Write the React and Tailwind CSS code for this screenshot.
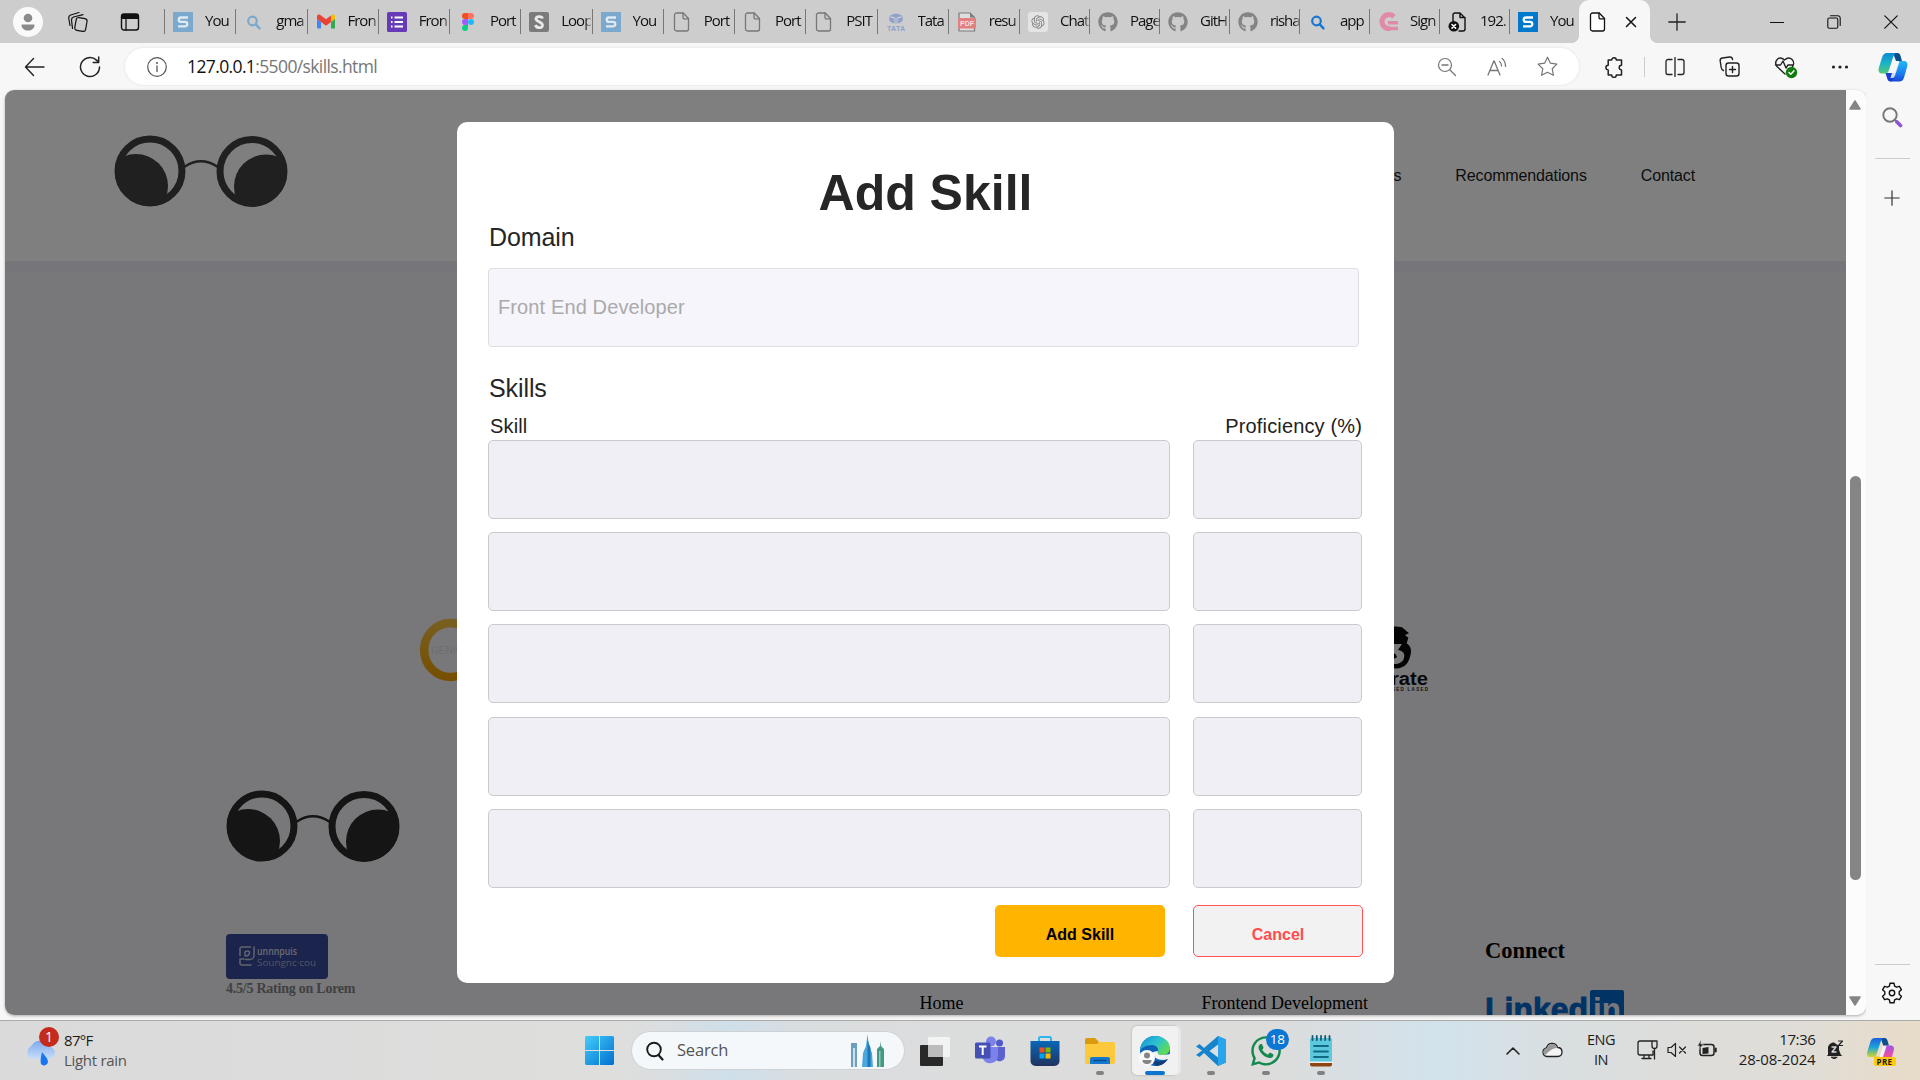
import React from "react";
import { FaGithub, FaWhatsapp } from "react-icons/fa";
import { RiOpenaiFill } from "react-icons/ri";

const Svg = ({ w = 20, h = 20, box, children, className = "" }) => (
  <svg width={w} height={h} viewBox={box || `0 0 ${w} ${h}`} fill="none" strokeLinecap="round" strokeLinejoin="round" className={"shrink-0 " + className}>
    {children}
  </svg>
);

/* ---------- tab icons ---------- */
const SIcon = ({ color, glyph = "#fff" }) => (
  <Svg>
    <rect width="20" height="20" fill={color} />
    <path d="M15 5.500H8a2.200 2.200 0 0 0 0 4.400h4a2.200 2.200 0 0 1 0 4.500H5" stroke={glyph} strokeWidth="2.400" strokeLinecap="butt" />
  </Svg>
);
const LoopIcon = () => (
  <Svg>
    <rect width="20" height="20" rx="2" fill="#7b7b7b" />
    <path d="M13.500 6.500C13 4.400 7.500 3.400 7 6.800c0 3.200 6.500 2.800 6.500 6.400 0 3.300-6 3.300-7-.2" stroke="#e9e9e9" strokeWidth="2.800" strokeLinecap="butt" />
  </Svg>
);
const SearchIcon = ({ color }) => (
  <Svg>
    <circle cx="8.500" cy="9" r="4.300" stroke={color} strokeWidth="2.200" />
    <path d="M11.800 12.400l3.700 4" stroke={color} strokeWidth="2.400" />
  </Svg>
);
const Gmail = () => (
  <Svg>
    <path d="M15 9v7.500h4v-12z" fill="#34a853" />
    <path d="M15 5.200V10l4-3V4.500c0-1.800-2-2.600-3.300-1.500z" fill="#fbbc04" />
    <path d="M1 4.500C1 2.700 3 2 4.300 3L10 7.300 15 3.500V10l-5 3.700L5 10 1 7z" fill="#ea4335" />
    <path d="M1 7l4 3v6.500H2a1 1 0 0 1-1-1z" fill="#4285f4" />
  </Svg>
);
const FormIcon = () => (
  <Svg>
    <rect width="20" height="20" rx="1.500" fill="#673ab7" />
    <path d="M4 5.500h1.500M4 10h1.500M4 14.500h1.500M7.500 5.500H16M7.500 10H16M7.500 14.500H16" stroke="#fff" strokeWidth="2.200" strokeLinecap="butt" />
  </Svg>
);
const Figma = () => (
  <Svg>
    <path d="M10 1H7a3 3 0 0 0 0 6h3z" fill="#f24e1e" />
    <path d="M10 1h3a3 3 0 0 1 0 6h-3z" fill="#ff7262" />
    <path d="M10 7H7a3 3 0 0 0 0 6h3z" fill="#a259ff" />
    <circle cx="13" cy="10" r="3" fill="#1abcfe" />
    <path d="M10 13H7a3 3 0 1 0 3 3z" fill="#0acf83" />
  </Svg>
);
const FileIcon = ({ color = "#777", fill = "none" }) => (
  <Svg>
    <path d="M4.500 1h6.700L16.500 6.500V17a2 2 0 0 1-2 2h-10a2 2 0 0 1-2-2V3a2 2 0 0 1 2-2z" stroke={color} strokeWidth="1.300" fill={fill} />
    <path d="M11 1v4.500a1.300 1.300 0 0 0 1.300 1.300h4.200" stroke={color} strokeWidth="1.300" />
  </Svg>
);
const Tata = () => (
  <Svg>
    <ellipse cx="10" cy="6.800" rx="7" ry="5" fill="#8ea0cb" />
    <path d="M9 12V7.500C8.800 5.500 7 5 4.500 5.200M11 12V7.500c.2-2 2-2.500 4.500-2.300" stroke="#cdcdcd" strokeWidth="1.100" />
    <text x="10" y="18.600" textAnchor="middle" fontFamily="Liberation Sans" fontWeight="700" fontSize="7" fill="#8ea0cb" textLength="18">TATA</text>
  </Svg>
);
const Pdf = () => (
  <Svg>
    <path d="M2 1h11l4.500 4.500V19H2z" stroke="#7b7b7b" strokeWidth="1.200" fill="#dedede" />
    <path d="M13 1v4.500h4.500z" fill="#7b7b7b" />
    <rect x="1" y="6" width="18" height="10.500" rx="1" fill="#e27f80" />
    <text x="10" y="14" textAnchor="middle" fontFamily="Liberation Sans" fontWeight="700" fontSize="7" fill="#f7dede" textLength="14">PDF</text>
  </Svg>
);
const Gpt = () => (
  <span className="flex h-5 w-5 shrink-0 items-center justify-center rounded-[3px] bg-[#e4e4e4]"><RiOpenaiFill size={16} color="#838383" /></span>
);
const Git = () => <FaGithub size={20} color="#848484" className="shrink-0" />;
const Pink = () => (
  <Svg>
    <path d="M16 4.700A7 7 0 1 0 12 16.500" stroke="#e08ba5" strokeWidth="5" strokeLinecap="butt" />
    <path d="M10 10.800h10M10 16.500h10" stroke="#e08ba5" strokeWidth="3.600" strokeLinecap="butt" />
  </Svg>
);
const BadFile = () => (
  <Svg>
    <path d="M5 9V3a2 2 0 0 1 2-2h5l5 5v11a2 2 0 0 1-2 2h-4M12 1v4.500h5" stroke="#111" strokeWidth="1.400" />
    <circle cx="5.800" cy="14.300" r="5.300" fill="#111" />
    <path d="M4 12.500l3.600 3.600M7.600 12.500L4 16.100" stroke="#fff" strokeWidth="1.500" />
  </Svg>
);

const wideTabs = [
  [<SIcon color="#7ba9cd" glyph="#dfe9f1" />, "You"], [<SearchIcon color="#7ba9cd" />, "gma"], [<Gmail />, "Fron"], [<FormIcon />, "Fron"],
  [<Figma />, "Port"], [<LoopIcon />, "Loop"], [<SIcon color="#7ba9cd" glyph="#dfe9f1" />, "You"], [<FileIcon />, "Port"],
  [<FileIcon />, "Port"], [<FileIcon />, "PSIT"], [<Tata />, "Tata"], [<Pdf />, "resu"],
];
const narrowTabs = [
  [<Gpt />, "Chat"], [<Git />, "Page"], [<Git />, "GitH"], [<Git />, "risha"], [<SearchIcon color="#1976d2" />, "app"],
  [<Pink />, "Sign"], [<BadFile />, "192."], [<SIcon color="#0078cb" />, "You"],
];

const Tab = ({ icon, label, className }) => (
  <div className={"flex h-[43px] items-center " + className}>
    <div className="mr-2 h-[25px] w-px shrink-0 bg-[#777]" />
    {icon}
    <span className="-mt-0.5 ml-3 w-[30px] whitespace-nowrap text-[15px] tracking-[-1px] text-[#111] [mask-image:linear-gradient(to_right,#000_80%,rgba(0,0,0,0.25))]">{label}</span>
  </div>
);

const TabBar = () => (
  <div className="flex h-[43px] bg-[#cdcdcd]">
    <div className="flex w-[164px] shrink-0 items-center">
      <div className="ml-[13px] flex h-[30px] w-[30px] items-center justify-center rounded-full bg-[#fafafa]">
        <Svg w={18} h={20}>
          <circle cx="9" cy="6" r="4.300" fill="#8b8b8b" />
          <path d="M2.500 12.500h13c0 4-3 6-6.500 6s-6.500-2-6.500-6z" fill="#8b8b8b" />
        </Svg>
      </div>
      <Svg w={22} h={22} className="ml-6">
        <rect x="8.500" y="7" width="11" height="13" rx="2.500" transform="rotate(10 14 13)" stroke="#111" strokeWidth="1.200" />
        <path d="M5.500 17.500L4.500 9a3 3 0 0 1 2-3l9.500-2.300M3 14.500L1.700 7a3 3 0 0 1 2-3L12 1.500" stroke="#111" strokeWidth="1.200" />
      </Svg>
      <Svg w={20} h={20} className="ml-[31px]">
        <rect x="1.500" y="2" width="17" height="16" rx="2.500" stroke="#111" strokeWidth="1.400" />
        <path d="M1.500 7V4.500A2.500 2.500 0 0 1 4 2h12a2.500 2.500 0 0 1 2.500 2.500V7z" fill="#111" />
        <path d="M6 7v11" stroke="#111" strokeWidth="1.300" />
      </Svg>
    </div>
    {wideTabs.map(([i, l], k) => <Tab key={k} icon={i} label={l} className="w-[71.250px]" />)}
    {narrowTabs.map(([i, l], k) => <Tab key={k} icon={i} label={l} className="w-[70px]" />)}
    <div className="relative flex w-[71px] items-center rounded-t-[10px] bg-[#f7f7f7] pl-[9px]">
      <div className="absolute -left-2 bottom-0 h-2 w-2 bg-[radial-gradient(circle_at_0_0,#cdcdcd_8px,#f7f7f7_8px)]" />
      <div className="absolute -right-2 bottom-0 h-2 w-2 bg-[radial-gradient(circle_at_100%_0,#cdcdcd_8px,#f7f7f7_8px)]" />
      <FileIcon color="#111" fill="#fff" />
      <Svg w={12} h={12} className="ml-[17px]"><path d="M1.500 1.500l9 9M10.500 1.500l-9 9" stroke="#111" strokeWidth="1.500" /></Svg>
    </div>
    <div className="flex flex-1 items-center justify-between pl-[18px] pr-[22px]">
      <Svg w={18} h={18}><path d="M9 .8v16.400M.8 9h16.400" stroke="#222" strokeWidth="1.300" /></Svg>
      <div className="flex items-center gap-[43px]">
        <Svg w={14} h={14}><path d="M.5 7.500h13" stroke="#111" strokeWidth="1.200" /></Svg>
        <Svg w={14} h={14}>
          <rect x=".8" y="3" width="10" height="10.300" rx="1.500" stroke="#111" strokeWidth="1.100" />
          <path d="M3.500.8H11a2.200 2.200 0 0 1 2.200 2.200v7.500" stroke="#111" strokeWidth="1.100" />
        </Svg>
        <Svg w={14} h={14}><path d="M.8.8l12.400 12.400M13.200.8L.8 13.200" stroke="#111" strokeWidth="1.200" /></Svg>
      </div>
    </div>
  </div>
);

const Copilot = ({ className, w = 30, h = 30, warm }) => (
  <Svg w={w} h={h} box="0 0 30 30" className={className}>
    <defs>
      <linearGradient id={warm ? "ca1" : "cb1"} x1="0" y1="0" x2="0" y2="1">
        <stop stopColor={warm ? "#1c5fe0" : "#0e8ad0"} /><stop offset=".5" stopColor={warm ? "#1ea6d8" : "#19b4c8"} /><stop offset="1" stopColor={warm ? "#d6d623" : "#55c878"} />
      </linearGradient>
      <linearGradient id={warm ? "ca2" : "cb2"} x1="0" y1="0" x2="0" y2="1">
        <stop stopColor={warm ? "#a650e8" : "#20b8f5"} /><stop offset=".6" stopColor={warm ? "#f0509a" : "#1a7ff0"} /><stop offset="1" stopColor={warm ? "#ff9350" : "#1746d8"} />
      </linearGradient>
    </defs>
    <path d="M15 1h4.500c2 0 2.600 1.500 3.200 3.500L24 9h-6z" fill="#0b4f8f" />
    <path d="M21 9h5c3 0 4 2.500 3.200 5.500l-3 10.500c-.8 3-2.400 4.500-5 4.500H10.500c3 0 4-1.500 5-5z" fill={`url(#${warm ? "ca2" : "cb2"})`} />
    <path d="M7.500 21l1.700 5.500c.6 2 1.300 3 3.300 3 1.700 0 2.600-1.500 3.200-3.500l1.700-5z" fill={warm ? "#f3b52a" : "#1540d8"} />
    <path d="M9 1h10c-2.400 0-3.200 2-4 4.500L11 18c-.8 2.500-1.800 3.500-4 3.500H4C1 21.500 0 19 .8 16L4 5.500C5 2.500 6.500 1 9 1z" fill={`url(#${warm ? "ca1" : "cb1"})`} />
    <path d="M17.500 10h4l-4.300 13c-.7 2-1.500 3-2.700 3h-2l4-13.500z" fill="#f7f7f7" opacity=".85" />
  </Svg>
);

const Toolbar = () => (
  <div className="flex h-[47px] items-center bg-[#f7f7f7]">
    <Svg w={22} h={22} className="ml-6"><path d="M20 11H1.500M9.500 2.500L1.500 11l8 8.500" stroke="#222" strokeWidth="1.400" /></Svg>
    <Svg w={22} h={22} className="ml-[33px]"><path d="M20.500 11A9.500 9.500 0 1 1 17.500 4.100L19.500 6M19.700 1v5.500h-5.500" stroke="#222" strokeWidth="1.500" /></Svg>
    <div className="ml-6 flex h-[37px] w-[1454px] items-center rounded-full bg-white shadow-[0_0_3px_rgba(0,0,0,0.1)]">
      <Svg w={20} h={20} className="ml-[22px]">
        <circle cx="10" cy="10" r="9.300" stroke="#555" strokeWidth="1.200" />
        <path d="M10 9v5.500" stroke="#555" strokeWidth="1.300" /><circle cx="10" cy="6" r="1" fill="#555" />
      </Svg>
      <span className="ml-5 text-[17.500px] tracking-[-0.620px] text-[#767676]"><span className="text-[#111]">127.0.0.1</span>:5500/skills.html</span>
      <div className="ml-auto mr-[21px] flex items-center gap-[30px]">
        <Svg><circle cx="8" cy="8" r="6.500" stroke="#767676" strokeWidth="1.200" /><path d="M5 8h6M13 13l5.500 5.500" stroke="#767676" strokeWidth="1.300" /></Svg>
        <Svg><path d="M1 18L6.800 4h.4L13 18M3 13.500h8" stroke="#767676" strokeWidth="1.300" /><path d="M12.500 4.500c1.500 1 2 2.500 2 4.500M15 1.500c2.500 1.800 3.500 4.500 3.500 8" stroke="#767676" strokeWidth="1.200" /></Svg>
        <Svg w={21} h={21}><path d="M10.500 1.200l2.900 6 6.500.9-4.700 4.600 1.200 6.600-5.900-3.100-5.900 3.100 1.200-6.600L1.100 8.100l6.500-.9z" stroke="#767676" strokeWidth="1.200" /></Svg>
      </div>
    </div>
    <Svg w={22} h={22} box="1 0 19 19" className="ml-6"><path d="M5.500 3.500h3a2 2 0 1 1 4 0h4.500v4.500a2 2 0 0 0-2 2 2 2 0 0 0 2 2V16.500h-4.500a2 2 0 1 1-4 0h-3V12a2 2 0 1 1 0-4z" stroke="#222" strokeWidth="1.300" /></Svg>
    <div className="ml-[19px] h-5 w-px bg-[#ccc]" />
    <Svg w={20} h={20} className="ml-5"><path d="M7 2.500H3a2 2 0 0 0-2 2v11a2 2 0 0 0 2 2h4M13 2.500h4a2 2 0 0 1 2 2v11a2 2 0 0 1-2 2h-4M10 .5v19" stroke="#222" strokeWidth="1.300" /></Svg>
    <Svg w={21} h={21} className="ml-[34px]">
      <rect x="7" y="7" width="13" height="13" rx="2.500" stroke="#222" strokeWidth="1.400" />
      <path d="M13.500 10.500v6M10.500 13.500h6M4.500 14.500C3 14 2.400 13 2.200 11.500l-1-6.500c-.2-1.500.8-2.800 2.300-3l7-1c1.700-.2 2.800.7 3.100 2.500" stroke="#222" strokeWidth="1.400" />
    </Svg>
    <Svg w={24} h={24} className="ml-[34px]">
      <path d="M11 19L3 11.500C-.5 7 4.500-.5 10.500 5c6-5.500 11.500 2 8 6.500M1.500 10h5l2.500-4 3 7 2-3h5" stroke="#222" strokeWidth="1.400" />
      <circle cx="17.500" cy="17.500" r="5.700" fill="#107c10" /><path d="M15 17.500l1.800 1.800 3.200-3.500" stroke="#fff" strokeWidth="1.400" />
    </Svg>
    <Svg w={18} h={6} className="ml-[33px]"><circle cx="2.500" cy="3" r="1.600" fill="#222" /><circle cx="9" cy="3" r="1.600" fill="#222" /><circle cx="15.500" cy="3" r="1.600" fill="#222" /></Svg>
    <Copilot className="ml-[29px]" />
  </div>
);

/* ---------- page ---------- */
const Glasses = ({ color, className, id }) => (
  <Svg w={174} h={73} className={className}>
    <clipPath id={id + "l"}><circle cx="36" cy="36" r="35" /></clipPath>
    <clipPath id={id + "r"}><circle cx="138" cy="36.500" r="35" /></clipPath>
    <circle cx="36" cy="36" r="32" stroke={color} strokeWidth="7" />
    <circle cx="138" cy="36.500" r="32" stroke={color} strokeWidth="7" />
    <circle cx="22" cy="51" r="32" fill={color} clipPath={`url(#${id}l)`} />
    <circle cx="152" cy="51.500" r="32" fill={color} clipPath={`url(#${id}r)`} />
    <path d="M71 31.500Q87 21 103 31.500" stroke={color} strokeWidth="2.400" />
  </Svg>
);

const Page = () => (
  <div className="flex h-full w-full flex-col overflow-hidden bg-[#f0f0f4]">
    <div className="flex h-[171px] shrink-0 items-start justify-between bg-white pl-[109px] pr-[151px] shadow-[0_11px_0_#ebebf4]">
      <Glasses id="top" color="#404040" className="mt-[45px]" />
      <div className="mt-[74px] flex gap-[54px] font-['Liberation_Sans'] text-base tracking-[-0.130px] text-[#1a1a1a]">
        <span>Projects</span><span>Recommendations</span><span>Contact</span>
      </div>
    </div>
    <div className="mt-[357px] flex h-[64px] shrink-0 justify-between pl-[415px] pr-[417px]">
      <Svg w={66} h={64}>
        <defs><linearGradient id="ring" x1="0" y1="0" x2="0" y2="1"><stop stopColor="#f0bd3f" /><stop offset="1" stopColor="#ee9f00" /></linearGradient></defs>
        <ellipse cx="30.500" cy="32" rx="26.300" ry="27" stroke="url(#ring)" strokeWidth="8.500" />
        <text x="11" y="35.500" fontFamily="Liberation Sans" fontSize="10" fill="#dadade">GENIUS</text>
      </Svg>
      <Svg w={100} h={76}>
        <path d="M52 10c8-2 16-2 21-.7l7 6-4 1.700 3.300 2.700-1.600 5.600c4 3 5 6.500 4 11C80 45 76 50.300 67 50.500 54 50 46 40 48 26z" fill="#080808" />
        <path d="M60 26h13l-4 6c6 1 7 4.500 6 8-1 4-5 6-10 6-5-1-7-3-8-6 4 2 8 2 11-1-1-4-5-5-8-5z" fill="#f0f0f4" />
        <text x="6" y="67" fontFamily="Liberation Sans" fontWeight="700" fontSize="18" fill="#111" textLength="93" lengthAdjust="spacingAndGlyphs">corporate</text>
        <text x="21" y="73" fontFamily="Liberation Sans" fontWeight="700" fontSize="4.500" fill="#222" textLength="78">PROJECT BASED LASED</text>
      </Svg>
    </div>
    <div className="mt-[107px] flex h-[226px] shrink-0 justify-between pl-[221px] pr-[221px]">
      <div className="w-[174px]">
        <Glasses id="foot" color="#2a2a2a" className="mt-[1px]" />
        <div className="mt-[71px] flex h-[45px] w-[102px] items-center rounded-[4px] bg-[#364899]">
          <Svg w={102} h={45}>
            <path d="M28 13v8.500a4 4 0 0 1-4 4h-4.500M24.500 13H16a2 2 0 0 0-2 2v6.500M14 25v4c0 1.500 1 2 2 2h9M18 25h-3M19 22v-3.500c0-2 4.500-2 4.500 0s-1 3.500-4.500 3.500z" stroke="#c4c8d8" strokeWidth="1.500" />
            <text x="31" y="21" fontFamily="Open Sans" fontWeight="600" fontSize="10" fill="#d4d7e4" textLength="40" lengthAdjust="spacingAndGlyphs">unnnpuis</text>
            <text x="31" y="31.500" fontFamily="Open Sans" fontSize="9.500" fill="#a4aac8" textLength="59" lengthAdjust="spacingAndGlyphs">Soungnc·cou</text>
          </Svg>
        </div>
        <div className="mt-px whitespace-nowrap font-['Liberation_Serif'] text-[14px] font-bold leading-[18px] tracking-[-0.240px] text-[#808080]">4.5/5 Rating on Lorem</div>
      </div>
      <div className="ml-[514px] mt-[202px] flex w-[560px] font-['Liberation_Serif'] text-lg leading-6 text-black">
        <div className="w-[282px]">Home</div><div>Frontend Development</div>
      </div>
      <div className="mt-[150px] w-[140px] font-['Liberation_Serif'] text-black">
        <div className="text-[22.500px] font-bold leading-6">Connect</div>
        <Svg w={139} h={40} className="mt-[27px]">
          <text x="0" y="31" fontFamily="Liberation Sans" fontWeight="700" fontSize="34" fill="#0466ca" stroke="#0466ca" strokeWidth="1" textLength="103" lengthAdjust="spacingAndGlyphs">Linked</text>
          <rect x="105" y="0" width="34" height="36" rx="2" fill="#0466ca" />
          <text x="108" y="31" fontFamily="Liberation Sans" fontWeight="700" fontSize="34" fill="#f0f0f4" textLength="28" lengthAdjust="spacingAndGlyphs">in</text>
        </Svg>
      </div>
    </div>
  </div>
);

const rows = [0, 1, 2, 3, 4];
const field = "rounded-[5px] border border-[#c9c9ce] bg-[#f0eff6]";

const Modal = () => (
  <div className="absolute inset-0 bg-black/50 pl-[452px] pt-8">
    <div className="flex h-[861px] w-[937px] flex-col rounded-[10px] bg-white px-[31px] font-['Liberation_Sans'] text-[#262626]">
      <h1 className="mt-[41px] text-center text-[50px] font-bold leading-[60px]">Add Skill</h1>
      <div className="mt-px pl-px text-[25px] leading-[26px] tracking-[-0.100px]">Domain</div>
      <div className="mt-[18px] flex h-[79px] w-[871px] items-center rounded-[4px] border border-[#dddde2] bg-[#f5f5fb] pb-0.5 pl-[9px] text-[20px] tracking-[0.120px] text-[#aaa]">Front End Developer</div>
      <div className="mt-[28px] pl-px text-[25px] leading-[26px] tracking-[-0.100px]">Skills</div>
      <div className="mt-[14px] flex w-[874px] justify-between pl-0.5 text-[20px] leading-[22px] tracking-[0.150px] text-[#222]"><span>Skill</span><span>Proficiency (%)</span></div>
      <div className="mt-[3px] flex flex-col gap-[13.200px]">
        {rows.map((r) => (
          <div key={r} className="flex h-[79px] w-[874px] justify-between">
            <div className={"w-[682px] " + field} />
            <div className={"w-[169px] " + field} />
          </div>
        ))}
      </div>
      <div className="mt-[17.200px] flex h-[52px] w-[875px] justify-end gap-7 text-base font-bold">
        <button className="w-[170px] rounded-[5px] bg-[#ffb400] pt-2 text-black">Add Skill</button>
        <button className="w-[170px] rounded-[5px] border border-[#ff5252] bg-[#f2f2f2] pt-2 text-[#ff4d4d]">Cancel</button>
      </div>
    </div>
  </div>
);

const Sidebar = () => (
  <div className="flex w-[54px] flex-col items-center bg-[#f7f7f7] pr-[2px]">
    <Svg w={22} h={22} className="mt-4">
      <circle cx="9" cy="9" r="6.700" stroke="#777" strokeWidth="1.900" /><path d="M14 14l2 2" stroke="#777" strokeWidth="2" /><path d="M16 16l3.500 3.500" stroke="#9052cf" strokeWidth="3.600" />
    </Svg>
    <div className="mt-[30px] h-px w-[35px] bg-[#ccc]" />
    <Svg w={16} h={16} className="mt-[31px]"><path d="M8 .8v14.400M.8 8h14.400" stroke="#333" strokeWidth="1.200" /></Svg>
    <div className="mt-auto h-px w-[35px] bg-[#ccc]" />
    <Svg w={22} h={22} className="mb-4 mt-[17px]">
      <path d="M9 1.200h4l.6 2.900 2 1.100 2.800-.9 2 3.400-2.200 2v2.600l2.200 2-2 3.400-2.800-.9-2 1.100-.6 2.900H9l-.6-2.900-2-1.100-2.800.9-2-3.400 2.200-2V9.700l-2.200-2 2-3.400 2.800.9 2-1.100z" stroke="#111" strokeWidth="1.400" />
      <circle cx="11" cy="11" r="2.700" stroke="#111" strokeWidth="1.400" />
    </Svg>
  </div>
);

/* ---------- taskbar ---------- */
const Cell = ({ children, dot, active }) => (
  <div className="flex w-[55.200px] shrink-0 justify-center">
    <div className={"relative flex h-[49px] w-[46px] items-center justify-center rounded-[5px] " + (active ? "bg-[#f1f1f1] shadow-[3px_0_0_#e9e9e9,0_0_2px_#999]" : "")}>
      {children}
      {dot && <div className={"absolute bottom-0 h-1 rounded-full " + (active ? "w-5 bg-[#0b74d1]" : "w-2 bg-[#828282]")} />}
    </div>
  </div>
);

const Taskbar = () => (
  <div className="flex h-[60px] items-center border-t border-[#aaa] bg-[linear-gradient(90deg,#dadada_0%,#dededd_32%,#dbdedf_34%,#cfdfea_38%,#dadddf_42%,#dcdcdb_58%,#dcdcdb_66%,#d9dee1_69%,#d2e3ec_75%,#d8dfe2_80%,#dddddb_87%,#e0ddd7_94%,#e8dcc8_100%)] text-[#1c1c1c]">
    <div className="relative ml-6 -mt-0.5">
      <Svg w={34} h={40}>
        <defs><linearGradient id="cl" x1="0" y1="0" x2="0" y2="1"><stop stopColor="#7ca9f0" /><stop offset="1" stopColor="#c9ddf8" /></linearGradient></defs>
        <path d="M8 29a7 7 0 0 1-.5-12.900A9.500 9.500 0 0 1 25 17a6 6 0 0 1 0 12z" fill="url(#cl)" />
        <path d="M18 22c3 4 6 6.500 6 10a4 4 0 0 1-7 2c-1-3 0-8 1-12z" fill="#1976f2" />
      </Svg>
      <div className="absolute -top-[3px] left-[15px] flex h-5 w-5 items-center justify-center rounded-full bg-[#c42b1c] text-[14px] text-white">1</div>
    </div>
    <div className="-mt-0.5 ml-[6px] w-[521px] text-[15px] leading-5 tracking-[-0.300px]"><div className="tracking-[-0.700px]">87°F</div><div className="text-[#555]">Light rain</div></div>
    <Svg w={29} h={29}>
      <defs><linearGradient id="win" x1="0" y1="0" x2="29" y2="29" gradientUnits="userSpaceOnUse"><stop stopColor="#45ccfb" /><stop offset="1" stopColor="#0070d0" /></linearGradient></defs>
      <path d="M1 0h13v14H0V1zM15 0h13l1 1v13H15zM0 15h14v14H1l-1-1zM15 15h14v13l-1 1H15z" fill="url(#win)" />
    </Svg>
    <div className="ml-[17px] flex h-[39px] w-[274px] items-center rounded-full border border-[#cfd2d4] bg-[#f5f8fa] pl-[13px]">
      <Svg w={19} h={20}><circle cx="9" cy="8.500" r="6.800" stroke="#1b1b1b" strokeWidth="1.900" /><path d="M13.500 14l4 4.500" stroke="#1b1b1b" strokeWidth="2.200" /></Svg>
      <span className="ml-[13px] text-[16.500px] tracking-[-0.200px] text-[#555]">Search</span>
      <Svg w={36} h={34} className="ml-auto mr-[19px]">
        <path d="M2 33V9h6v24z" fill="#6d9fbe" /><path d="M4 14h2v19H4z" fill="#c9dfeb" />
        <path d="M13 33l1-14 3-7 1.500-12L20 12l3 7 1 14z" fill="#4aa7dd" /><path d="M18.500 6v27h3V14z" fill="#1c77b7" />
        <path d="M28 33V15l3-3 .5-5 .5 5 3 3v18z" fill="#459984" /><path d="M30 17h1.500v16H30z" fill="#92cbb8" />
      </Svg>
    </div>
    <div className="ml-[2px] flex">
      <Cell><Svg w={30} h={30}><rect x="0" y="9" width="23" height="21" rx="1" fill="#292929" /><rect x="8" y="1" width="22" height="20" rx="1" fill="#f5f5f5" opacity=".9" /><path d="M8 9h15v12H8z" fill="#bcbcbc" /></Svg></Cell>
      <Cell><Svg w={30} h={30}>
        <circle cx="24.500" cy="7" r="3.500" fill="#5059c9" /><path d="M19 11h11v9a5.500 5.500 0 0 1-9 4z" fill="#5b62cf" /><circle cx="16" cy="5.500" r="5" fill="#7b83eb" />
        <path d="M8 11h15v9a8 8 0 0 1-15 3z" fill="#7b83eb" /><rect x="0" y="6.500" width="15.500" height="16" rx="1.500" fill="#4550b5" />
        <path d="M4 10.500h7.500M7.700 10.500v8.500" stroke="#fff" strokeWidth="2" strokeLinecap="butt" /></Svg></Cell>
      <Cell><Svg w={30} h={32}>
        <defs><linearGradient id="st" x1="0" y1="0" x2="0" y2="1"><stop stopColor="#0967b8" /><stop offset="1" stopColor="#20335f" /></linearGradient></defs>
        <path d="M9 8V3.500a1.500 1.500 0 0 1 1.500-1.500h9A1.500 1.500 0 0 1 21 3.500V8" stroke="#2db5ee" strokeWidth="2" /><path d="M.5 6h29v20a5 5 0 0 1-5 5h-19a5 5 0 0 1-5-5z" fill="url(#st)" />
        <path d="M9.500 12.500h5v5h-5z" fill="#f25022" /><path d="M15.500 12.500h5v5h-5z" fill="#7fba00" /><path d="M9.500 18.500h5v5h-5z" fill="#00a4ef" /><path d="M15.500 18.500h5v5h-5z" fill="#ffb900" /></Svg></Cell>
      <Cell dot><Svg w={30} h={28}>
        <path d="M0 3a2 2 0 0 1 2-2h8l4 4v5H0z" fill="#db9a0d" /><path d="M0 7h12l2-2h14a2 2 0 0 1 2 2v18a2 2 0 0 1-2 2H2a2 2 0 0 1-2-2z" fill="#fcc93c" />
        <path d="M5 27v-5a2 2 0 0 1 2-2h16a2 2 0 0 1 2 2v5z" fill="#1579cf" /><path d="M9 23.500h12" stroke="#0b4e90" strokeWidth="1.500" /></Svg></Cell>
      <Cell dot active><Svg w={32} h={32}>
        <defs><linearGradient id="ed" x1="0" y1="0" x2="1" y2=".6"><stop stopColor="#168bd6" /><stop offset=".55" stopColor="#2bc3d2" /><stop offset="1" stopColor="#5fdb55" /></linearGradient></defs>
        <circle cx="16" cy="16" r="15" fill="#0d62b5" /><path d="M1 16C1 8 7 1 16 1s15 6 15 12c0 5-4 7-8 7-3 0-5-1-4-3 1-3-1-7-6-7C7 10 2 13 1 16z" fill="url(#ed)" />
        <path d="M14 17c0 5 4 8 10 8 3 0 5-1 6-2l2-4-9 1c-3 0-5-1-4-4z" fill="#f1f1f1" /><path d="M13 25c5 2 11 2 16-1-3 4.500-7 7-12 7z" fill="#123c7a" />
        <circle cx="8" cy="23" r="8" fill="#fafafa" /><circle cx="8" cy="20.500" r="3" fill="#858585" /><path d="M3.500 25h9c0 3-2 4-4.500 4s-4.500-1-4.500-4z" fill="#858585" /></Svg></Cell>
      <Cell dot><Svg w={30} h={30}>
        <path d="M22 0l8 3.500v23L22 30l-14-13-4.500 4L0 19l6-4.500L0 10.500 3.500 8l4.500 4z" fill="#1684cc" /><path d="M22 8.500v13L13.500 15z" fill="#dcdfe0" /><path d="M22 0l8 3.500v23L22 30z" fill="#29a5ee" /></Svg></Cell>
      <Cell dot><FaWhatsapp size={34} color="#14894e" className="shrink-0" /><div className="absolute left-[23px] top-[3px] flex h-[21px] w-[23px] items-center justify-center rounded-full bg-[#0b76d3] text-[13.500px] tracking-tight text-white">18</div></Cell>
      <Cell dot><Svg w={24} h={32}>
        <rect x="1" y="3" width="22" height="26" rx="1.500" fill="#5cc8de" /><path d="M1 28h22v1.500a2 2 0 0 1-2 2H3a2 2 0 0 1-2-2z" fill="#8f4510" /><path d="M1 27.300h22" stroke="#eee" strokeWidth="1.500" />
        <path d="M3.500 1v4M7.800 1v4M12 1v4M16.200 1v4M20.500 1v4" stroke="#145c72" strokeWidth="1.800" /><path d="M5 11h14M5 16.500h14M5 22h14" stroke="#116a85" strokeWidth="1.800" /></Svg></Cell>
    </div>
    <Svg w={14} h={8} className="ml-[157px]"><path d="M1 7l6-6 6 6" stroke="#222" strokeWidth="1.600" /></Svg>
    <Svg w={21} h={16} className="-mt-0.5 ml-[22px]"><path d="M5 14.500a4.300 4.300 0 0 1-.5-8.500C6 0 14 0 15.500 5.500c6 0 6 9 0 9z" fill="#f5f5f5" stroke="#222" strokeWidth="1.300" /><path d="M1.500 11C1 7 4 6 5 6c2-5.500 9-5 10.500 0C11 6 8 8 3 13.500z" fill="#999" /></Svg>
    <div className="-mt-0.5 ml-[19px] w-[39px] text-center text-[14.500px] leading-5 tracking-[-0.500px]">ENG<br />IN</div>
    <Svg w={21} h={21} className="-mt-0.5 ml-[16px]"><path d="M15 2H3a2 2 0 0 0-2 2v10a2 2 0 0 0 2 2h13V12M7 16v3.500M12 16v3.500M5 19.500h9M15 2h5v5a2.500 2.500 0 0 1-5 0zM17.500 9.500V20" stroke="#222" strokeWidth="1.300" /></Svg>
    <Svg w={20} h={16} className="-mt-0.5 ml-[9px]"><path d="M1 5.500h3L8.500 1.500v13L4 10.500H1zM12.500 5l6 6M18.500 5l-6 6" stroke="#222" strokeWidth="1.200" /></Svg>
    <Svg w={20} h={18} className="-mt-1 ml-[10px]"><rect x="3" y="4.500" width="14" height="11" rx="2.500" stroke="#222" strokeWidth="1.500" /><path d="M5.500 14V8l6-1v6.500z" fill="#222" /><path d="M18.700 8.500v3" stroke="#222" strokeWidth="2" /><path d="M4 0L.5 6h2.300L1.500 10 6.500 4H4z" fill="#222" stroke="#dcdcdb" strokeWidth=".5" /></Svg>
    <div className="-mt-1 ml-[10px] w-[89px] whitespace-nowrap text-right text-[15px] leading-5 tracking-[-0.150px]"><span className="tracking-[-0.400px]">17:36</span><br />28-08-2024</div>
    <Svg w={18} h={20} className="-mt-0.5 ml-[10px]"><path d="M2 15V8c0-3 2.500-5.500 6-5.500L13 6v4l2 5 1.500 1H.5z" fill="#222" /><path d="M5.500 17.500q2.700 2.500 5.400 0z" fill="#222" stroke="#222" /><path d="M6 7h4l-4 5h4" stroke="#dcdcdb" strokeWidth="1.300" /><path d="M12.500 1h4l-4 4.500h4" stroke="#222" strokeWidth="1.200" /></Svg>
    <div className="relative ml-[22px]"><Copilot warm w={29} h={28} /><div className="absolute -bottom-px left-2 h-[9px] w-[22px] rounded-[2px] bg-[#ffca0a] text-center text-[8px] font-bold leading-[9px] tracking-[0.400px]">PRE</div></div>
  </div>
);

export default function App() {
  return (
    <div className="flex h-[1080px] w-[1920px] flex-col overflow-hidden bg-[#f7f7f7] font-['Open_Sans','Noto_Sans',sans-serif]">
      <TabBar />
      <Toolbar />
      <div className="flex h-[930px] shrink-0">
        <div className="ml-[5px] flex h-[925px] w-[1861px] overflow-hidden rounded-[9px] bg-[#fcfcfc] shadow-[0_1px_3px_rgba(0,0,0,0.3)]">
          <div className="relative h-full w-[1841px] shrink-0"><Page /><Modal /></div>
          <div className="flex flex-1 flex-col items-center justify-between pb-[9px] pr-[2px] pt-[10px]">
            <Svg w={12} h={10}><path d="M6 1L11 9H1z" fill="#858585" stroke="#858585" strokeWidth="1.500" /></Svg>
            <div className="mt-[250px] h-[404px] w-[11px] rounded-full bg-[#858585]" />
            <Svg w={12} h={10}><path d="M6 9L11 1H1z" fill="#858585" stroke="#858585" strokeWidth="1.500" /></Svg>
          </div>
        </div>
        <Sidebar />
      </div>
      <Taskbar />
    </div>
  );
}
